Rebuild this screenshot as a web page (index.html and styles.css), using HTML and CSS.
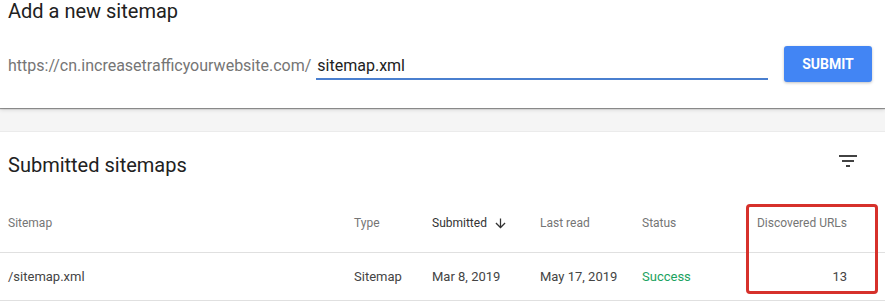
FILE: index.html
```html
<!DOCTYPE html>
<html>
<head>
<meta charset="utf-8">
<link rel="stylesheet" href="styles.css">
</head>
<body>
<section class="card add-card">
  <h1 class="card-title top-title">Add a new sitemap</h1>
  <div class="add-form">
    <span class="prefix">https://cn.increasetrafficyourwebsite.com/</span>
    <div class="url-input">sitemap.xml</div>
    <button class="submit-btn">SUBMIT</button>
  </div>
</section>
<section class="card list-card">
  <div class="list-head">
    <h2 class="card-title">Submitted sitemaps</h2>
    <svg class="filter-icon" viewBox="0 0 24 24" width="24" height="24"><path d="M10 18h4v-2h-4v2zM3 6v2h18V6H3zm3 7h12v-2H6v2z" fill="#424242"/></svg>
  </div>
  <div class="table">
    <div class="row head-row">
      <div class="cell">Sitemap</div>
      <div class="cell">Type</div>
      <div class="cell sorted">Submitted <svg class="sort-arrow" viewBox="0 0 24 24" width="15" height="15"><path d="M20 12l-1.41-1.41L13 16.17V4h-2v12.17l-5.58-5.59L4 12l8 8 8-8z" fill="#333"/></svg></div>
      <div class="cell">Last read</div>
      <div class="cell">Status</div>
      <div class="cell num">Discovered URLs</div>
    </div>
    <div class="row data-row">
      <div class="cell">/sitemap.xml</div>
      <div class="cell">Sitemap</div>
      <div class="cell">Mar 8, 2019</div>
      <div class="cell">May 17, 2019</div>
      <div class="cell success">Success</div>
      <div class="cell num">13</div>
    </div>
  </div>
  <div class="highlight"></div>
</section>
</body>
</html>
```

FILE: styles.css
```css
* { box-sizing: border-box; }
html, body { margin: 0; padding: 0; }
body {
  background: #f5f5f5;
  font-family: Roboto, "Liberation Sans", Arial, sans-serif;
  width: 885px;
  height: 302px;
  overflow: hidden;
}
.card {
  background: #fff;
}
.card-title {
  margin: 0;
  font-size: 20px;
  line-height: 20px;
  font-weight: 400;
  color: #212121;
}
.top-title {
  line-height: 24px;
  margin-top: -1px;
}
.add-card {
  display: flex;
  flex-direction: column;
  padding: 0 13px 0 8px;
  height: 108px;
  box-shadow: 0 1px 1px rgba(0,0,0,0.38), 0 2px 4px rgba(0,0,0,0.12);
  position: relative;
  z-index: 1;
}
.add-form {
  margin-top: 23px;
  display: flex;
  align-items: flex-start;
  height: 36px;
}
.prefix {
  padding-top: 10px;
  font-size: 16px;
  line-height: 20px;
  color: #757575;
  white-space: nowrap;
}
.url-input {
  flex: 1;
  margin-left: 5px;
  margin-right: 16px;
  padding: 10px 0 2px 1px;
  font-size: 16px;
  line-height: 20px;
  color: #212121;
  border-bottom: 2px solid #4a7fcf;
}
.submit-btn {
  width: 88px;
  height: 36px;
  border: 0;
  border-radius: 3px;
  background: #4285f4;
  color: #fff;
  font-family: Roboto, "Liberation Sans", Arial, sans-serif;
  font-weight: 700;
  font-size: 14px;
  box-shadow: 0 1px 3px rgba(0,0,0,0.25);
  padding: 0;
}
.list-card {
  margin-top: 23px;
  border-top: 1px solid #ebebeb;
  height: 171px;
  position: relative;
}
.list-head {
  display: flex;
  justify-content: space-between;
  align-items: flex-start;
  padding: 23px 25px 0 8px;
}
.filter-icon {
  margin-top: -6px;
  display: block;
}
.row {
  display: grid;
  grid-template-columns: 346px 78px 108px 102px 1fr auto;
  padding: 0 38px 0 8px;
  border-bottom: 1px solid #e0e0e0;
}
.head-row {
  padding-top: 40px;
  padding-bottom: 21px;
  font-size: 12px;
  line-height: 16px;
  color: #757575;
}
.data-row {
  padding-top: 16px;
  padding-bottom: 15px;
  font-size: 13px;
  line-height: 16px;
  color: #444;
}
.cell { white-space: nowrap; }
.sorted {
  color: #333;
  display: flex;
  align-items: center;
}
.sort-arrow {
  margin-left: 6px;
  display: block;
}
.num { text-align: right; }
.success { color: #1aa260; }
.highlight {
  position: absolute;
  left: 746px;
  top: 72px;
  width: 132px;
  height: 90px;
  border: 3px solid #d6312b;
  border-radius: 4px;
}
```
